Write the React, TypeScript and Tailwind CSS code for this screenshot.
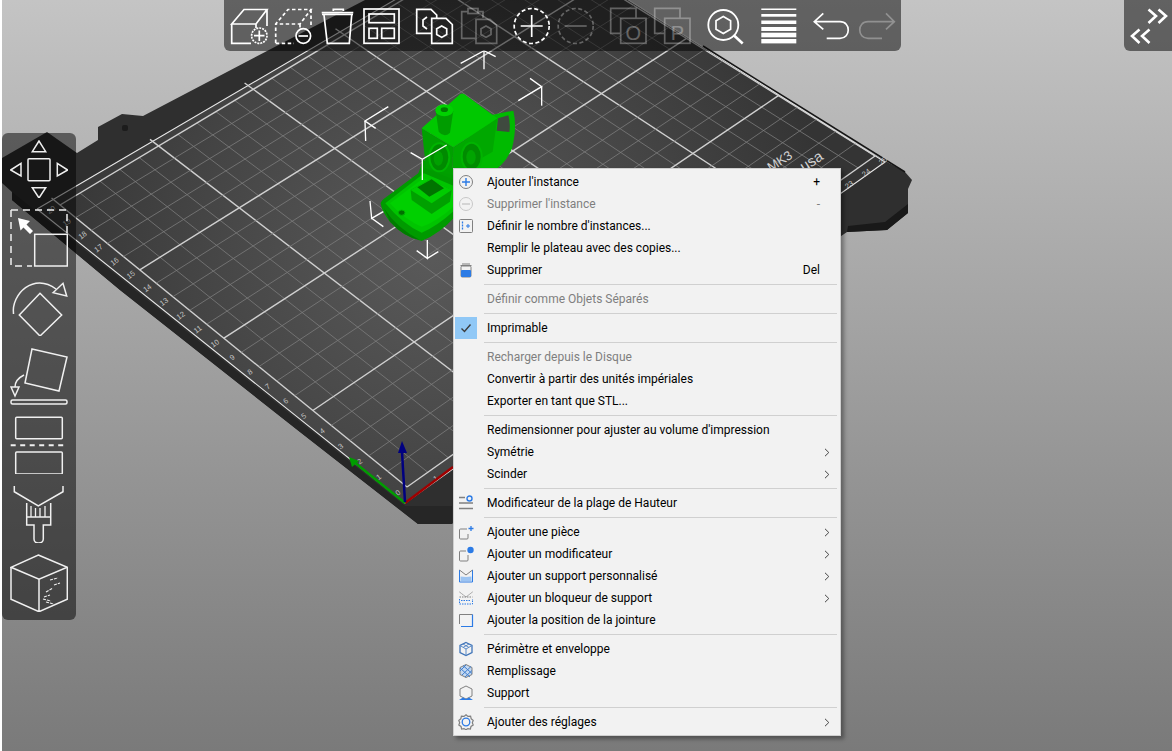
import type { ReactNode } from "react";

const font = { fontFamily: 'Roboto, "Noto Sans", sans-serif' };

// bed plate projection, grid is 25 x 20 cm
const Q = [
  [407, 487],
  [875, 156],
  [516, -68],
  [60, 205],
];
function makeProject() {
  const [[x0, y0], [x1, y1], [x2, y2], [x3, y3]] = Q;
  const sx = x0 - x1 + x2 - x3;
  const sy = y0 - y1 + y2 - y3;
  const dx1 = x1 - x2;
  const dx2 = x3 - x2;
  const dy1 = y1 - y2;
  const dy2 = y3 - y2;
  const det = dx1 * dy2 - dx2 * dy1;
  const g = (sx * dy2 - dx2 * sy) / det;
  const h = (dx1 * sy - sx * dy1) / det;
  const a = x1 - x0 + g * x1;
  const b = x3 - x0 + h * x3;
  const d = y1 - y0 + g * y1;
  const e = y3 - y0 + h * y3;
  return (cx: number, cy: number) => {
    const u = cx / 25;
    const v = cy / 20;
    const w = g * u + h * v + 1;
    return [(a * u + b * v + x0) / w, (d * u + e * v + y0) / w];
  };
}
const project = makeProject();

function GridLine({ from, to, major }: { from: number[]; to: number[]; major: boolean }) {
  const p = project(from[0], from[1]);
  const q = project(to[0], to[1]);
  return (
    <line
      x1={p[0]}
      y1={p[1]}
      x2={q[0]}
      y2={q[1]}
      stroke={major ? "#d0d0d0" : "#7c7c7c"}
      strokeWidth={major ? 1.4 : 0.8}
    />
  );
}

function Boat() {
  return (
    <g transform="translate(340 40) scale(0.33333)">
      {/* stern */}
      <path d="M455 225 Q490 218 520 212 Q532 260 516 325 Q495 375 455 395 L340 395 L400 250 Z" fill="#00ba00" />
      <path d="M474 235 L505 226 Q512 250 508 276 L470 272 Z" fill="#3f4a3f" />
      {/* hull joint under the cabin */}
      <polygon points="250,360 345,390 345,450 235,400" fill="#009e00" />
      {/* cabin */}
      <polygon points="245,265 340,322 336,405 258,385" fill="#00a000" />
      <polygon points="340,322 472,235 458,335 336,405" fill="#00a800" />
      <path d="M245 265 L360 163 Q366 158 373 163 L472 235 L340 322 Z" fill="#00c800" />
      <ellipse cx="298" cy="352" rx="30" ry="42" fill="#008a00" stroke="#00b400" strokeWidth="6" />
      <ellipse cx="295" cy="355" rx="14" ry="22" fill="#00a000" />
      <ellipse cx="395" cy="350" rx="30" ry="42" fill="#008c00" stroke="#00b400" strokeWidth="6" />
      <ellipse cx="393" cy="352" rx="14" ry="22" fill="#00a400" />
      {/* chimney */}
      <path d="M287 212 L296 275 Q313 295 330 278 L340 212 Z" fill="#009c00" />
      <ellipse cx="313" cy="211" rx="27" ry="18" fill="#00d200" />
      <ellipse cx="313" cy="209" rx="11" ry="7" fill="#007e00" />
      {/* deck */}
      <path d="M122 490 Q124 480 140 470 L255 385 L345 420 V530 Q300 580 245 603 Q190 590 150 545 Q125 515 122 490 Z" fill="#009a00" />
      <path d="M136 490 L252 400 L342 438 V512 Q292 558 245 578 Q190 555 136 490 Z" fill="#00c400" />
      <path d="M150 490 L250 415 L340 450 V500 Q290 545 245 560 Q195 540 150 490 Z" fill="#00d000" />
      <path d="M132 505 Q170 565 240 600 Q190 590 150 545 Z" fill="#007c00" />
      {/* cargo box */}
      <polygon points="212,450 270,418 335,450 330,485 275,522 215,480" fill="#00a000" />
      <polygon points="212,450 270,418 335,450 275,490" fill="#00cc00" />
      <polygon points="232,442 275,418 312,445 268,470" fill="#007400" />
      <ellipse cx="185" cy="518" rx="10" ry="8" fill="#007000" stroke="#00b800" strokeWidth="3" />
      {/* selection corners */}
      <g fill="none" stroke="#fff" strokeWidth="4">
        <polyline points="362,70 432,32 467,50" />
        <line x1="432" y1="32" x2="432" y2="88" />
        <polyline points="570,115 605,140 535,182" />
        <line x1="605" y1="140" x2="605" y2="197" />
        <polyline points="145,200 75,243 107,265" />
        <line x1="75" y1="243" x2="77" y2="303" />
        <polyline points="320,315 247,358 212,338" />
        <line x1="247" y1="358" x2="247" y2="420" />
        <polyline points="90,483 95,535 130,515" />
        <line x1="95" y1="535" x2="130" y2="560" />
        <polyline points="262,600 262,655 230,632" />
        <line x1="262" y1="655" x2="295" y2="635" />
      </g>
    </g>
  );
}

function Scene() {
  const xs = Array.from({ length: 26 }, (_, i) => i);
  const ys = Array.from({ length: 21 }, (_, i) => i);
  return (
    <svg className="absolute inset-0" width="1172" height="751" viewBox="0 0 1172 751">
      <defs>
        <radialGradient id="plate" gradientUnits="userSpaceOnUse" cx="430" cy="250" r="400">
          <stop offset="0" stopColor="#5a5a5a" />
          <stop offset="0.6" stopColor="#444444" />
          <stop offset="1" stopColor="#343434" />
        </radialGradient>
      </defs>
      <polygon
        points="2,158 47,132 77,153 98,140 98,127 122,114 143,116 267,51 365,0 617,0 830,130 905,172 912,180 908,189 908,213 887,230 847,232 600,400 452,524 418,524 300,432 120,290 12,200 12,192 2,183"
        fill="#2f2f2f"
      />
      <polygon points="12,192 405,506 452,506 452,524 418,524 300,432 120,290 12,200" fill="#262626" />
      <polygon points="847,232 887,230 908,213 908,204 885,222 848,226" fill="#191919" />
      <rect x="122" y="125" width="6" height="6" rx="2" fill="#1c1c1c" />
      {/* plate */}
      <polygon points="37,209 516,-71 875,156 885,163 405,503" fill="url(#plate)" />
      <polyline points="37,209 516,-71 885,162 405,503 37,209" fill="none" stroke="#e8e8e8" strokeWidth="1.1" />
      <line x1="703" y1="46" x2="905" y2="172" stroke="#161616" strokeWidth="1.5" />
      {xs.map((x) => (
        <GridLine key={x} from={[x, 0]} to={[x, x % 5 === 0 ? 20.55 : 20]} major={x % 5 === 0} />
      ))}
      {ys.map((y) => (
        <GridLine key={y} from={[0, y]} to={[25, y]} major={y % 5 === 0} />
      ))}
      {/* ruler digits */}
      {xs.map((x) => {
        const [px, py] = project(x, -0.42);
        return (
          <text key={x} x={px} y={py} fill="#c4c4c4" fontSize="7.5" textAnchor="middle" dominantBaseline="middle" fontFamily='"Liberation Sans", sans-serif' transform={`rotate(-36 ${px} ${py})`}>
            {x === 0 ? "" : x}
          </text>
        );
      })}
      {ys.map((y) => {
        const [px, py] = project(-0.42, y);
        return (
          <text key={y} x={px} y={py} fill="#c4c4c4" fontSize="7.5" textAnchor="middle" dominantBaseline="middle" fontFamily='"Liberation Sans", sans-serif' transform={`rotate(-36 ${px} ${py})`}>
            {y}
          </text>
        );
      })}
      <text x="771" y="172" fill="#d0d0d0" fontSize="13" fontFamily='"Liberation Sans", sans-serif' transform="rotate(-33 771 172)">MK3</text>
      <text x="804" y="172" fill="#d0d0d0" fontSize="15" fontFamily='"Liberation Sans", sans-serif' transform="rotate(-33 804 172)">usa</text>
      {/* axes */}
      <line x1="405" y1="503" x2="453" y2="467" stroke="#a00000" strokeWidth="2.4" />
      <line x1="405" y1="503" x2="354" y2="462" stroke="#009c00" strokeWidth="2.4" />
      <polygon points="349,457 359,461 352,467" fill="#009c00" />
      <line x1="402" y1="452" x2="405" y2="502" stroke="#000080" strokeWidth="2.5" />
      <polygon points="402,441 398,453 407,453" fill="#000080" />
      <Boat />
    </svg>
  );
}

function Tool({ children, dim }: { children: ReactNode; dim?: boolean }) {
  return (
    <svg
      width="44"
      height="44"
      viewBox="0 0 44 44"
      fill="none"
      stroke="#fff"
      strokeWidth="1.7"
      className={dim ? "shrink-0 opacity-30" : "shrink-0"}
    >
      {children}
    </svg>
  );
}

function TopBar() {
  return (
    <div className="absolute left-[224px] top-0 flex h-[51px] w-[677px] items-center rounded-b-md bg-black/50 pl-1">
      <Tool>
        <path d="M3.7 20 L16 5.5 H39 L28 20 Z M3.7 20 V39.3 H23 M28 20 V24 M39 5.5 V22" />
        <circle cx="31.3" cy="31.7" r="7.7" strokeDasharray="2 1" />
        <path d="M31.3 26.5 V37 M26 31.7 H36.5" />
      </Tool>
      <Tool>
        <path d="M3.7 39 V20 L16 5.5 H39 L28 20 H3.7 M28 20 V24 M39 5.5 V22 M3.7 39.3 H22" strokeDasharray="3.5 2.5" />
        <circle cx="31.3" cy="32" r="7.3" />
        <path d="M26.5 32 H36" />
      </Tool>
      <Tool>
        <path d="M5.7 8.7 H37.3 M6 10.5 H37 M17.3 7 V5.3 H27.3 V7" />
        <path d="M8 11 L11.3 39.3 H33.3 L35.7 11" />
      </Tool>
      <Tool>
        <rect x="4" y="5" width="35" height="34.3" />
        <rect x="9" y="10" width="25.3" height="8.7" />
        <rect x="9" y="24.3" width="8.3" height="10" />
        <rect x="21.7" y="24.3" width="12.6" height="10" />
      </Tool>
      <div className="ml-[9px]">
        <Tool>
          <path d="M18.7 29.3 H3.7 V5.3 H18 L23.7 11 V14" />
          <path d="M14 13 L10 16 V22 L14 25" />
          <path d="M18.7 14.3 H33 L39.3 20.5 V39.3 H18.7 Z" />
          <polygon points="28.7,22 33.7,24.8 33.7,30.6 28.7,33.4 23.7,30.6 23.7,24.8" />
        </Tool>
      </div>
      <Tool dim>
        <path d="M19 34.3 H4.7 V7.7 H11 M20 7.7 H26 V14" />
        <rect x="11" y="4.5" width="10" height="5" />
        <path d="M19 15.3 H33 L39.7 21.5 V39.3 H19 Z" />
        <polygon points="29,22 34,24.8 34,30.6 29,33.4 24,30.6 24,24.8" />
      </Tool>
      <div className="ml-[9px]">
        <Tool>
          <circle cx="21.7" cy="22" r="17.5" strokeDasharray="4 2.5" />
          <path d="M21.7 11 V33 M10.7 22 H32.7" />
        </Tool>
      </div>
      <Tool dim>
        <circle cx="21.7" cy="22" r="17.5" strokeDasharray="4 2.5" />
        <path d="M10.7 22 H32.7" />
      </Tool>
      <div className="ml-[9px]">
        <Tool dim>
          <path d="M13.7 29.3 H3.7 V4.3 H29 V14.3" />
          <rect x="13.7" y="14.3" width="25.3" height="25" />
          <text x="26.3" y="35.5" fontSize="20" textAnchor="middle" fill="#fff" stroke="none" fontFamily='"Liberation Sans", sans-serif'>O</text>
        </Tool>
      </div>
      <Tool dim>
        <path d="M13.7 29.3 H3.7 V4.3 H29 V14.3" />
        <rect x="13.7" y="14.3" width="25.3" height="25" />
        <text x="26.3" y="35.5" fontSize="20" textAnchor="middle" fill="#fff" stroke="none" fontFamily='"Liberation Sans", sans-serif'>P</text>
      </Tool>
      <div className="ml-[9px]">
        <Tool>
          <circle cx="19.3" cy="21" r="15" strokeWidth="1.8" />
          <polygon points="19.3,12.5 26.6,16.7 26.6,25.2 19.3,29.4 12,25.2 12,16.7" />
          <path d="M29.5 31 L38.7 39.5" strokeWidth="2.6" />
        </Tool>
      </div>
      <div className="ml-[9px]">
        <Tool>
          <rect x="4.3" y="4.5" width="35" height="1.5" fill="#fff" stroke="none" />
          <rect x="4.3" y="10" width="35" height="2.7" fill="#fff" stroke="none" />
          <rect x="4.3" y="16.5" width="35" height="3.5" fill="#fff" stroke="none" />
          <rect x="4.3" y="23" width="35" height="4" fill="#fff" stroke="none" />
          <rect x="4.3" y="28.7" width="35" height="4.6" fill="#fff" stroke="none" />
          <rect x="4.3" y="35" width="35" height="4.4" fill="#fff" stroke="none" />
        </Tool>
      </div>
      <div className="ml-[9px]">
        <Tool>
          <path d="M13.3 9.3 L4.3 17.7 L13.3 25.3 M4.3 17.7 H30 C41 17.7 41 34.3 30 34.3 H16.7" />
        </Tool>
      </div>
      <Tool dim>
        <path d="M32 9.3 L40.3 17.7 L32 25.3 M40.3 17.7 H14 C3 17.7 3 34.3 14 34.3 H28" />
      </Tool>
    </div>
  );
}

function Side({ children }: { children: ReactNode }) {
  return (
    <svg width="58" height="58" viewBox="0 0 58 58" fill="none" stroke="#f0f0f0" strokeWidth="1.5" className="shrink-0">
      {children}
    </svg>
  );
}

function LeftBar() {
  return (
    <div className="absolute left-[2px] top-[133px] flex h-[487px] w-[74px] flex-col gap-[11px] rounded-md bg-black/50 pl-2 pt-[7px]">
      <Side>
        <polygon points="29,1 22.3,11.7 35.7,11.7" />
        <rect x="18" y="18.7" width="22" height="22" rx="1" />
        <polygon points="0.7,30 11,23.3 11,36" />
        <polygon points="47.3,23.3 47.3,36 57.7,30" />
        <polygon points="22.3,47.7 35.7,47.7 29,58" />
      </Side>
      <Side>
        <path d="M1 1 H57 V24 M1 1 V57 H22" strokeDasharray="7 5" />
        <rect x="24.7" y="25.3" width="32.6" height="31.7" />
        <polygon points="8,9 20,12 16.5,15.5 23,22 20,25 13.5,18.5 10.5,21.5" fill="#fff" stroke="none" />
      </Side>
      <Side>
        <path d="M3.5 36 C1 16 24 -6 46 11" />
        <polygon points="43,14.7 53,5.3 56.7,18" />
        <polygon points="30,15.3 51.7,37 30,58 9.3,37" />
      </Side>
      <Side>
        <polygon points="22,2 57,10 49,44 15,36" />
        <path d="M14 28 C8 31 5 35 5 40" />
        <polygon points="1,40 9,40 5,49" />
        <rect x="1" y="53" width="56" height="4" rx="1.5" />
      </Side>
      <Side>
        <rect x="5.7" y="1.3" width="46.6" height="21.4" rx="1" />
        <path d="M0.7 29.3 H57" strokeDasharray="5 4.5" strokeWidth="2" />
        <rect x="5.7" y="36" width="46.6" height="22" rx="1" />
      </Side>
      <Side>
        <path d="M4.3 1 V6.7 L28.3 21 L53 6.7 V1" />
        <path d="M16.7 18 V40 H24 V54 Q24 58 28.5 58 Q33.3 58 33.3 54 V40 H40.7 V18 M16.7 32 H40.7" />
        <path d="M21 21 V32 M25.5 23 V32 M30 23 V32 M35 21 V32" strokeWidth="1.3" />
      </Side>
      <Side>
        <polygon points="28.3,1 57.3,13.3 29,25.3 1,13.3" />
        <path d="M1 13.3 V45.3 L29 57.7 L57.3 45.3 V13.3 M29 25.3 V57.7" />
        <path d="M40 26 L48 24 M44 31 L50 29 M36 38 L43 34 M34 43 L40 41 M36 48 L44 50 M33 45 L41 47" strokeDasharray="3 1" strokeWidth="1.1" />
      </Side>
    </div>
  );
}

function RightBar() {
  return (
    <div className="absolute right-0 top-0 h-[51px] w-[48px] rounded-bl-md bg-black/50">
      <svg width="48" height="51" viewBox="0 0 48 51" fill="none" stroke="#fff" strokeWidth="2.6">
        <path d="M24.5 9.5 L32 16 L24.5 23 M34.5 9.5 L42 16 L34.5 23" />
        <path d="M15.5 29.5 L8 36 L15.5 43 M25.5 29.5 L18 36 L25.5 43" />
      </svg>
    </div>
  );
}

const BLUE = "#2c7be5";
const GRAY = "#808080";

function MI({ children }: { children: ReactNode }) {
  return (
    <svg width="16" height="16" viewBox="0 0 16 16" fill="none">
      {children}
    </svg>
  );
}

const icons: Record<string, ReactNode> = {
  plus: (
    <MI>
      <circle cx="8" cy="8" r="6.5" stroke={GRAY} />
      <path d="M8 4 V12 M4 8 H12" stroke={BLUE} strokeWidth="1.4" />
    </MI>
  ),
  minus: (
    <MI>
      <circle cx="8" cy="8" r="6.5" stroke="#c8c8c8" />
      <path d="M4 8 H12" stroke="#c8c8c8" strokeWidth="1.4" />
    </MI>
  ),
  count: (
    <MI>
      <rect x="1.5" y="1.5" width="13" height="13" rx="1" stroke={GRAY} />
      <path d="M4.5 3.5 V12.5" stroke={BLUE} strokeWidth="1.3" strokeDasharray="2 1" />
      <path d="M8 8 H12 M10 6 V10" stroke={BLUE} />
    </MI>
  ),
  trash: (
    <MI>
      <path d="M4 2 H12 M2.5 3.5 H13.5" stroke={GRAY} strokeWidth="1.2" />
      <rect x="3" y="4" width="10" height="11" rx="1.2" stroke={GRAY} />
      <rect x="3" y="8" width="10" height="7" rx="1" fill={BLUE} />
    </MI>
  ),
  check: (
    <MI>
      <path d="M3.5 8.5 L6.5 11.5 L12.5 4.5" stroke="#3c3c3c" strokeWidth="1.4" />
    </MI>
  ),
  height: (
    <MI>
      <path d="M1 2.5 H7 M1 8 H15 M1 13.5 H15" stroke={GRAY} strokeWidth="1.4" />
      <circle cx="11.5" cy="3.5" r="2.5" stroke={BLUE} strokeWidth="1.4" />
    </MI>
  ),
  part: (
    <MI>
      <path d="M9 5 H2.5 Q1.5 5 1.5 6 V14 Q1.5 15 2.5 15 H9 Q10 15 10 14 V10" stroke={GRAY} />
      <path d="M13 2 V7 M10.5 4.5 H15.5" stroke={BLUE} strokeWidth="1.3" />
    </MI>
  ),
  modifier: (
    <MI>
      <path d="M8 5 H2.5 Q1.5 5 1.5 6 V14 Q1.5 15 2.5 15 H9 Q10 15 10 14 V9" stroke={GRAY} />
      <circle cx="12.5" cy="4" r="3.2" fill={BLUE} />
    </MI>
  ),
  support: (
    <MI>
      <path d="M1.5 2 V14 H14.5 V2" stroke={BLUE} />
      <path d="M1.5 2 L8 7 L14.5 2" stroke={GRAY} />
      <path d="M2.5 8.5 L8 9 L13.5 8.5 V13 H2.5 Z" fill="#9cc4f2" />
    </MI>
  ),
  blocker: (
    <MI>
      <path d="M1.5 9 V14 H14.5 V9" stroke={BLUE} strokeDasharray="1.5 1" />
      <path d="M1.5 2 L8 7 L14.5 2 M1.5 7 H14.5" stroke={GRAY} strokeDasharray="1.5 1" />
      <path d="M3 10.5 H13" stroke={BLUE} strokeDasharray="1.5 1" />
    </MI>
  ),
  seam: (
    <MI>
      <path d="M1.5 12 V2.5 H14.5" stroke={GRAY} />
      <path d="M14.5 2.5 V14.5 H3" stroke={BLUE} strokeWidth="1.2" />
    </MI>
  ),
  perimeter: (
    <MI>
      <polygon points="8,1.5 14,4.5 14,11.5 8,14.5 2,11.5 2,4.5" stroke="#3f74b8" strokeWidth="1.3" />
      <path d="M2 4.5 L8 8 L14 4.5 M8 8 V14.5 M5 3 L11 6.5 M11 3 L5 6.5" stroke="#5d8cc8" />
    </MI>
  ),
  infill: (
    <MI>
      <polygon points="8,1.5 14,4.5 14,11.5 8,14.5 2,11.5 2,4.5" fill="#c4d8f0" stroke={GRAY} />
      <path d="M2 8 L8 2 M4 12 L13 3.5 M7 14 L14 7.5 M2 5 L12 14 M5 2.5 L14 10.5" stroke="#3f7fd0" />
    </MI>
  ),
  supportHex: (
    <MI>
      <polygon points="8,1 14,4 14,11 8,14 2,11 2,4" stroke={GRAY} />
      <path d="M1 15 L5 12.5 L8 14 L11 12.5 L15 15 Z" fill={BLUE} />
    </MI>
  ),
  gear: (
    <MI>
      <polygon points="8,0.8 10,2.4 12.6,2.2 13.2,4.8 15.2,6.4 14.3,8.8 15.2,11 13,12.4 12.4,15 9.8,14.6 8,15.8 6,14.6 3.6,15 3,12.4 0.8,11 1.7,8.8 0.8,6.4 2.8,4.8 3.4,2.2 6,2.4" stroke={GRAY} strokeWidth="1.2" />
      <circle cx="8" cy="8" r="3.8" stroke={BLUE} strokeWidth="1.3" />
    </MI>
  ),
};

type Item = { label: string; icon?: string; off?: boolean; key?: string; sub?: boolean; active?: boolean };

const groups: Item[][] = [
  [
    { label: "Ajouter l'instance", icon: "plus", key: "+" },
    { label: "Supprimer l'instance", icon: "minus", key: "-", off: true },
    { label: "Définir le nombre d'instances...", icon: "count" },
    { label: "Remplir le plateau avec des copies..." },
    { label: "Supprimer", icon: "trash", key: "Del" },
  ],
  [{ label: "Définir comme Objets Séparés", off: true }],
  [{ label: "Imprimable", icon: "check", active: true }],
  [
    { label: "Recharger depuis le Disque", off: true },
    { label: "Convertir à partir des unités impériales" },
    { label: "Exporter en tant que STL..." },
  ],
  [
    { label: "Redimensionner pour ajuster au volume d'impression" },
    { label: "Symétrie", sub: true },
    { label: "Scinder", sub: true },
  ],
  [{ label: "Modificateur de la plage de Hauteur", icon: "height" }],
  [
    { label: "Ajouter une pièce", icon: "part", sub: true },
    { label: "Ajouter un modificateur", icon: "modifier", sub: true },
    { label: "Ajouter un support personnalisé", icon: "support", sub: true },
    { label: "Ajouter un bloqueur de support", icon: "blocker", sub: true },
    { label: "Ajouter la position de la jointure", icon: "seam" },
  ],
  [
    { label: "Périmètre et enveloppe", icon: "perimeter" },
    { label: "Remplissage", icon: "infill" },
    { label: "Support", icon: "supportHex" },
  ],
  [{ label: "Ajouter des réglages", icon: "gear", sub: true }],
];

function Row({ item }: { item: Item }) {
  return (
    <div className={`flex h-[22px] items-center ${item.off ? "text-[#7f7f7f]" : "text-black"}`}>
      <div className={`flex h-[22px] w-[22px] shrink-0 items-center justify-center ${item.active ? "bg-[#90c8f6]" : ""}`}>
        {item.icon ? icons[item.icon] : null}
      </div>
      <span className="ml-[10px] flex-1 whitespace-nowrap">{item.label}</span>
      {item.key ? <span className="mr-[20px]">{item.key}</span> : null}
      {item.sub ? (
        <svg width="6" height="9" viewBox="0 0 6 9" fill="none" stroke="#444" className="mr-[10px]">
          <path d="M1 0.8 L4.8 4.5 L1 8.2" />
        </svg>
      ) : null}
    </div>
  );
}

function ContextMenu() {
  return (
    <div
      className="absolute left-[453px] top-[168px] w-[388px] border border-[#cfcfcf] bg-[#f2f2f2] py-[2px] pl-[1px] text-[12px] leading-none shadow-[3px_3px_4px_rgba(0,0,0,0.35)]"
      style={font}
    >
      {groups.map((group, i) => (
        <div key={i}>
          {i > 0 ? <div className="my-[3px] ml-[29px] mr-[3px] h-px bg-[#d0d0d0]" /> : null}
          {group.map((item) => (
            <Row key={item.label} item={item} />
          ))}
        </div>
      ))}
    </div>
  );
}

export default function App() {
  return (
    <div className="relative h-[751px] w-[1172px] overflow-hidden bg-gradient-to-b from-[#c4c4c4] to-[#7a7a7a]">
      <Scene />
      <div className="absolute inset-y-0 left-0 w-[2px] bg-white" />
      <TopBar />
      <LeftBar />
      <RightBar />
      <ContextMenu />
    </div>
  );
}
